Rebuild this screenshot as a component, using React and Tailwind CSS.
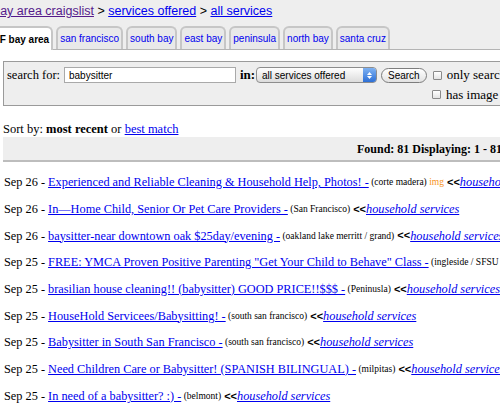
import React from "react";

const tabs = ["san francisco", "south bay", "east bay", "peninsula", "north bay", "santa cruz"];

const listings = [
  { date: "Sep 26", title: "Experienced and Reliable Cleaning & Household Help, Photos! -", loc: "(corte madera)", img: true },
  { date: "Sep 26", title: "In\u2014Home Child, Senior Or Pet Care Providers -", loc: "(San Francisco)" },
  { date: "Sep 26", title: "baysitter-near downtown oak $25day/evening -", loc: "(oakland lake merritt / grand)" },
  { date: "Sep 25", title: "FREE: YMCA Proven Positive Parenting \"Get Your Child to Behave\" Class -", loc: "(ingleside / SFSU / CCSF)" },
  { date: "Sep 25", title: "brasilian house cleaning!! (babysitter) GOOD PRICE!!$$$ -", loc: "(Peninusla)" },
  { date: "Sep 25", title: "HouseHold Servicees/Babysitting! -", loc: "(south san francisco)" },
  { date: "Sep 25", title: "Babysitter in South San Francisco -", loc: "(south san francisco)" },
  { date: "Sep 25", title: "Need Children Care or Babysitter! (SPANISH BILINGUAL) -", loc: "(milpitas)" },
  { date: "Sep 25", title: "In need of a babysitter? :) -", loc: "(belmont)" },
];

const Checkbox = () => (
  <span className="inline-block w-[9px] h-[9px] border border-[#8a8a8a] rounded-[1px] bg-gradient-to-b from-white to-[#e4e4e4] mr-[5px]" />
);

const App = () => {
  return (
    <div className="w-[500px] h-[416px] overflow-hidden bg-white text-black font-['Liberation_Serif',serif]">
      <div className="w-[560px]">
        {/* header */}
        <div className="bg-[#eeeeee] font-['Liberation_Sans',Arial,sans-serif]">
          <div className="h-[26px] pt-[3px] text-[12.5px] leading-[16px] whitespace-nowrap -ml-[20px]">
            <a className="text-[#551a8b] underline">sf bay area craigslist</a>
            <span> &gt; </span>
            <a className="text-[#0000ee] underline">services offered</a>
            <span> &gt; </span>
            <a className="text-[#0000ee] underline">all services</a>
          </div>

          {/* Tabs */}
          <div className="flex items-end gap-[3px] h-[24px] border-b border-[#b4b4b4] text-[10px] whitespace-nowrap">
            <div className="-ml-[11px] -mb-px h-[24px] flex items-center px-[2px] bg-white border-2 border-b-0 border-[#c6c6c6] rounded-t-[6px] font-bold">
              SF bay area
            </div>
            {tabs.map((t) => (
              <div
                key={t}
                className="h-[23px] flex items-center px-[2px] bg-[#e9e9e9] border-2 border-b-0 border-[#c6c6c6] rounded-t-[6px] text-[#0000ee]"
              >
                {t}
              </div>
            ))}
          </div>
        </div>

        {/* Search box */}
        <div className="mt-[11px] ml-[3px] h-[45px] border border-[#9a9a9a] bg-[#eeeeee] pl-[3px] pt-[3px]">
          <div className="flex items-center h-[20px] whitespace-nowrap">
            <span className="text-[12.5px] w-[57px]">search for:</span>
            <div className="w-[172px] h-[16px] bg-white border border-[#a9a9a9] flex items-center pl-[4px] text-[10px] font-['Liberation_Sans',Arial,sans-serif]">
              babysitter
            </div>
            <span className="text-[13px] font-bold ml-[4px] w-[16px]">in:</span>
            <div className="w-[121px] h-[16px] rounded-[4px] border border-[#8d8d8d] bg-gradient-to-b from-white to-[#dcdcdc] flex items-center text-[10px] font-['Liberation_Sans',Arial,sans-serif] overflow-hidden">
              <span className="pl-[5px] flex-1">all services offered</span>
              <span className="w-[13px] h-full bg-gradient-to-b from-[#7fb2f2] to-[#2c6fd6] flex flex-col items-center justify-center gap-[1px]">
                <svg width="5" height="3" viewBox="0 0 5 3"><path d="M0 3L2.5 0L5 3Z" fill="#fff" /></svg>
                <svg width="5" height="3" viewBox="0 0 5 3"><path d="M0 0L2.5 3L5 0Z" fill="#fff" /></svg>
              </span>
            </div>
            <div className="ml-[4px] h-[15px] px-[6px] rounded-full border border-[#7d7d7d] bg-gradient-to-b from-white to-[#e2e2e2] flex items-center text-[10px] font-['Liberation_Sans',Arial,sans-serif]">
              Search
            </div>
            <div className="ml-[6px] flex items-center text-[13px]">
              <Checkbox />
              only search titles
            </div>
          </div>
          <div className="flex items-center h-[19px] pl-[425px] text-[13px] whitespace-nowrap">
            <Checkbox />
            has image
          </div>
        </div>

        {/* Sort */}
        <div className="mt-[15px] ml-[3px] text-[12.5px] leading-[16px] whitespace-nowrap">
          Sort by: <b>most recent</b> or <a className="text-[#0000ee] underline">best match</a>
        </div>

        <div className="ml-[3px] h-[25px] bg-[#eeeeee] border-b-2 border-[#bdbdbd] flex items-center justify-end pr-[58px] text-[12px] font-bold whitespace-nowrap">
          Found: 81 Displaying: 1 - 81
        </div>

        {/* Listings */}
        <div className="mt-[7px] ml-[4px]">
          {listings.map((l, i) => (
            <p key={i} className="h-[26.7px] flex items-center whitespace-nowrap text-[12.3px]">
              <span>{l.date} -&nbsp;</span>
              <a className="text-[#0000ee] underline">{l.title}</a>
              <span className="text-[9.5px]">&nbsp;{l.loc}</span>
              {l.img && <span className="text-[9.5px] text-[#f7941d]">&nbsp;img</span>}
              <span className="text-[11px] font-bold font-['Liberation_Sans',Arial,sans-serif]">&nbsp;&lt;&lt;</span>
              <a className="text-[#0000ee] underline italic">household services</a>
            </p>
          ))}
        </div>
      </div>
    </div>
  );
};

export default App;
